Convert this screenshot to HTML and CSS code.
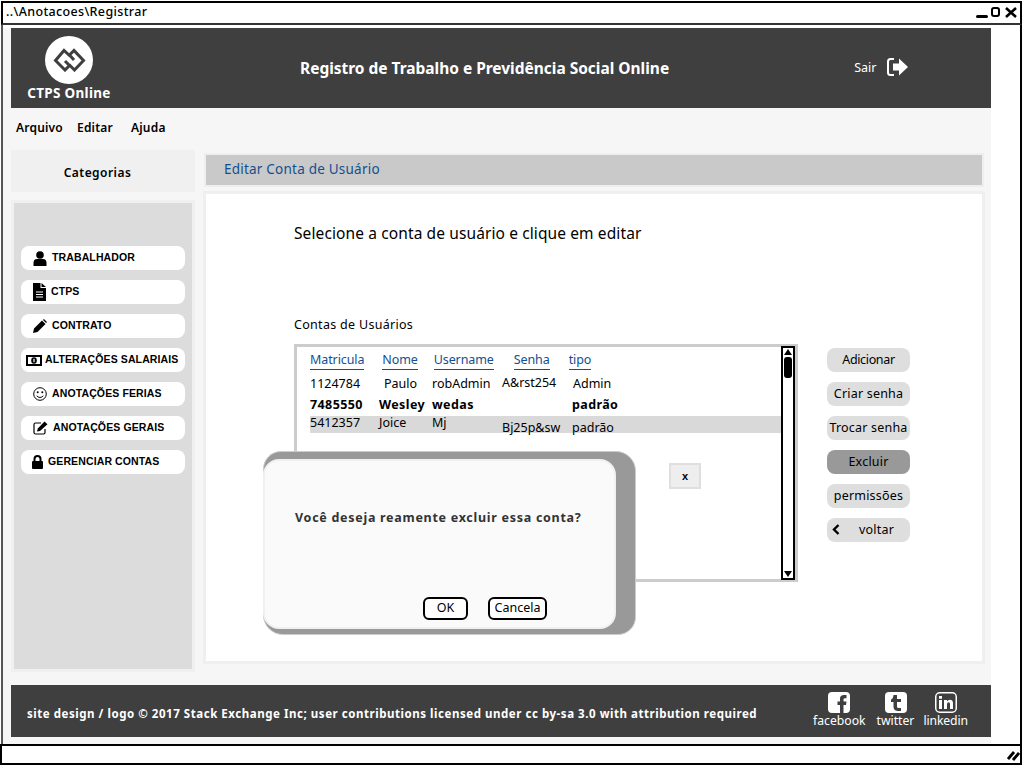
FILE: index.html
```html
<!DOCTYPE html>
<html lang="pt">
<head>
<meta charset="utf-8">
<title>CTPS Online</title>
<link rel="stylesheet" href="styles.css">
</head>
<body>
<div class="window">
  <div class="titlebar">
    <span class="path">..\Anotacoes\Registrar</span>
    <div class="winctl">
      <span class="win-min"></span>
      <span class="win-max"></span>
      <svg class="win-x" width="12" height="11" viewBox="0 0 12 11"><path d="M1 1l10 9M11 1L1 10" stroke="#000" stroke-width="2.600" fill="none"/></svg>
    </div>
  </div>
  <div class="body">
    <div class="sheet">
    <header class="hero">
      <div class="brand">
        <div class="logo">
          <svg width="33" height="24" viewBox="0 0 33 24"><path d="M17 8L11 2.500 2.500 12.500 12 22l4.500-4.500-4.500-4.500M16 16.500l5.500 5.500 9-9.500-9.500-10L16.500 7l4.500 5" stroke="#3f3f3f" stroke-width="3" fill="none"/></svg>
        </div>
        <span class="brand-name">CTPS Online</span>
      </div>
      <h1 class="hero-title">Registro de Trabalho e Previdência Social Online</h1>
      <div class="logout">
        <span>Sair</span>
        <svg width="23" height="20" viewBox="0 0 23 20"><path d="M8 2H4.500Q2 2 2 4.500v11Q2 18 4.500 18H8" stroke="#fff" stroke-width="2" fill="none"/><path d="M7 6.500h6V1.500l9 8.500-9 8.500v-5H7z" fill="#fff"/></svg>
      </div>
    </header>
    <nav class="menu"><span>Arquivo</span><span>Editar</span><span>Ajuda</span></nav>
    <div class="main">
      <aside class="side">
        <div class="cat">Categorias</div>
        <div class="side-panel">
          <a class="nav nav-a"><svg width="14" height="15" viewBox="0 0 14 15"><circle cx="7" cy="4" r="3.800"/><path d="M.5 15v-3Q.5 8 4 8h6q3.500 0 3.500 4v3z"/></svg><span>TRABALHADOR</span></a>
          <a class="nav nav-b"><svg width="13" height="18" viewBox="0 0 13 18"><path d="M0 0h7.500v5H13v13H0z"/><path d="M8.500 0L13 4H8.500z"/><path d="M3 9h7M3 11.500h7M3 14h7" stroke="#fff" stroke-width="1.200"/></svg><span>CTPS</span></a>
          <a class="nav nav-c"><svg width="14" height="14" viewBox="0 0 14 14"><path d="M0 14l1-4.500L9 1.500l3.500 3.500L4.500 13zM10 .9l.9-.9L14 3.100l-.9.9z"/></svg><span>CONTRATO</span></a>
          <a class="nav nav-d"><svg width="16" height="11" viewBox="0 0 16 11"><rect width="16" height="11"/><rect x="2" y="2" width="12" height="7" fill="#fff"/><ellipse cx="8" cy="5.500" rx="2.800" ry="3.200"/><rect x="7.400" y="3.800" width="1.200" height="3.400" fill="#fff"/></svg><span>ALTERAÇÕES SALARIAIS</span></a>
          <a class="nav nav-e"><svg width="14" height="14" viewBox="0 0 14 14"><circle cx="7" cy="7" r="6.300" fill="none" stroke="#000"/><circle cx="4.700" cy="5.300" r="1"/><circle cx="9.300" cy="5.300" r="1"/><path d="M3.700 8.800q3.300 3.400 6.600 0" fill="none" stroke="#000"/></svg><span>ANOTAÇÕES FERIAS</span></a>
          <a class="nav nav-f"><svg width="15" height="14" viewBox="0 0 15 14"><path d="M8 2H2.500Q1 2 1 3.500v8Q1 13 2.500 13h8q1.500 0 1.500-1.500V8" fill="none" stroke="#000" stroke-width="1.200"/><path d="M4 10.500l.8-3L11.500.5 14.500 3.200 7 10z"/></svg><span>ANOTAÇÕES GERAIS</span></a>
          <a class="nav nav-g"><svg width="11" height="14" viewBox="0 0 11 14"><path d="M2.500 6V4a3 3 0 0 1 6 0v2" fill="none" stroke="#000" stroke-width="2"/><rect y="6" width="11" height="8" rx="1"/></svg><span>GERENCIAR CONTAS</span></a>
        </div>
      </aside>
      <section class="content">
        <div class="crumb"><span>Editar Conta de Usuário</span></div>
        <div class="panel">
          <p class="lead">Selecione a conta de usuário e clique em editar</p>
          <p class="list-label">Contas de Usuários</p>
          <div class="list-row">
            <div class="list">
              <div class="list-body">
                <div class="thead">
                  <a class="th th-1">Matricula</a><a class="th th-2">Nome</a><a class="th th-3">Username</a><a class="th th-4">Senha</a><a class="th">tipo</a>
                </div>
                <div class="tr tr-1">
                  <span>1124784</span><span class="in-5">Paulo</span><span>robAdmin</span><span class="up">A&amp;rst254</span><span class="in-1">Admin</span>
                </div>
                <div class="tr tr-2">
                  <span>7485550</span><span>Wesley</span><span>wedas</span><span></span><span>padrão</span>
                </div>
                <div class="tr tr-3">
                  <span class="up2">5412357</span><span class="up2">Joice</span><span class="up2">Mj</span><span class="down">Bj25p&amp;sw</span><span class="down">padrão</span>
                </div>
              </div>
              <div class="scroll">
                <span class="sc-up"></span>
                <span class="sc-thumb"></span>
                <span class="sc-fill"></span>
                <span class="sc-down"></span>
              </div>
            </div>
            <div class="actions">
              <button class="btn btn-tight">Adicionar</button>
              <button class="btn">Criar senha</button>
              <button class="btn">Trocar senha</button>
              <button class="btn btn-dark">Excluir</button>
              <button class="btn">permissões</button>
              <button class="btn btn-back"><svg width="8" height="11" viewBox="0 0 8 11"><path d="M6.500 1L2 5.500 6.500 10" stroke="#000" stroke-width="2.400" fill="none"/></svg><span>voltar</span></button>
            </div>
          </div>
        </div>
      </section>
    </div>
    <footer class="foot">
      <p class="legal">site design / logo © 2017 Stack Exchange Inc; user contributions licensed under cc by-sa 3.0 with attribution required</p>
      <div class="social">
        <a class="soc soc-fb"><svg width="22" height="21" viewBox="0 0 22 21"><rect width="22" height="21" rx="4" fill="#fff"/><path d="M12 21v-8H9.500V9.500H12V6.500Q12 3 16 3h2.500v3.300H17q-1.500 0-1.500 1.300v1.900h3l-.5 3.500h-2.500v8z" fill="#3f3f3f"/></svg><span>facebook</span></a>
        <a class="soc soc-tw"><svg width="22" height="21" viewBox="0 0 22 21"><rect width="22" height="21" rx="4" fill="#fff"/><path d="M8.500 3H12v4h4v3h-4v4.500q0 1.500 1.500 1.500H16v3h-3.500Q8.500 18.500 8.500 14.500V10H6V7.500Q8 7 8.500 3z" fill="#3f3f3f"/></svg><span>twitter</span></a>
        <a class="soc soc-in"><svg width="22" height="21" viewBox="0 0 22 21"><rect x=".75" y=".75" width="20.500" height="19.500" rx="4" fill="none" stroke="#fff" stroke-width="1.500"/><path d="M4 8h3v9H4zM4 4h3v2.700H4zM9 8h3v1.300Q13 7.800 15 7.800q3 0 3 3.700V17h-3v-5q0-1.700-1.400-1.700-1.600 0-1.600 1.900V17H9z" fill="#fff"/></svg><span>linkedin</span></a>
      </div>
    </footer>
    </div>
  </div>
  <div class="statusbar">
    <svg width="13" height="12" viewBox="0 0 13 12"><path d="M1 10L7 3M6 11L12 4" stroke="#000" stroke-width="2.800" fill="none"/></svg>
  </div>
  <button class="close-x">x</button>
  <div class="dialog">
    <div class="dialog-card">
      <p class="dialog-text">Você deseja reamente excluir essa conta?</p>
      <div class="dialog-actions">
        <button class="dbtn dbtn-ok">OK</button>
        <button class="dbtn dbtn-cancel">Cancela</button>
      </div>
    </div>
  </div>
</div>
</body>
</html>
```
FILE: styles.css
```css
* { box-sizing: border-box; }
html, body { margin: 0; padding: 0; background: #fff; }
body { width: 1024px; height: 768px; overflow: hidden; font-family: "Noto Sans", "Lato", sans-serif; color: #000; }
p, h1 { margin: 0; }
a { color: inherit; text-decoration: none; }
button { font-family: inherit; margin: 0; cursor: pointer; }

.window { position: relative; width: 1022px; height: 767px; padding-top: 1px; display: flex; flex-direction: column; }

.titlebar { height: 24px; margin-left: 1px; border: 2px solid #000; border-bottom-color: #333; background: #fff; display: flex; align-items: center; justify-content: space-between; padding: 0 3px 0 3px; flex: none; }
.path { font-size: 12.500px; line-height: 18px; font-weight: 500; letter-spacing: .35px; margin-top: -2px; }
.winctl { display: flex; align-items: center; gap: 3px; margin-top: -2px; }
.win-min { width: 12px; height: 3px; background: #000; border-radius: 2px; margin-top: 8px; }
.win-max { width: 9px; height: 10px; border: 2px solid #000; border-radius: 3px; margin-right: 2px; }

.body { flex: none; height: 719px; margin-left: 1px; border-left: 2px solid #555; border-right: 2px solid #000; padding: 3px 29px 0 0; background: #fff; display: flex; flex-direction: column; }
.sheet { flex: 1; background: #f6f6f6; padding-left: 8px; display: flex; flex-direction: column; }

.hero { height: 80px; background: #3f3f3f; color: #fff; display: flex; align-items: flex-start; flex: none; }
.brand { width: 116px; padding-top: 8px; display: flex; flex-direction: column; align-items: center; }
.logo { width: 48px; height: 48px; border-radius: 50%; background: #fff; display: flex; align-items: center; justify-content: center; }
.brand-name { font-size: 13.500px; line-height: 17px; font-weight: 700; letter-spacing: .3px; margin-top: 1px; white-space: nowrap; }
.hero-title { font-size: 15.500px; line-height: 20px; font-weight: 700; letter-spacing: -.02px; margin-left: 173px; margin-top: 30px; white-space: nowrap; }
.logout { display: flex; align-items: center; gap: 10px; font-size: 12.500px; margin-left: 185px; margin-top: 29px; height: 20px; }

.menu { height: 42px; flex: none; padding: 0 0 4px 5px; display: grid; grid-template-columns: 61px 54px auto; justify-content: start; align-items: center; font-size: 12px; font-weight: 600; letter-spacing: .2px; }

.main { flex: none; height: 525px; display: flex; }
.side { width: 184px; display: flex; flex-direction: column; gap: 8px; flex: none; }
.cat { height: 42px; flex: none; background: #f0f0f0; display: flex; align-items: center; justify-content: center; font-size: 12px; font-weight: 600; letter-spacing: .45px; padding-right: 11px; padding-top: 3px; }
.side-panel { height: 472px; flex: none; background: #dcdcdc; border: 3px solid #f0f0f0; padding: 43px 7px 0 7px; display: flex; flex-direction: column; gap: 10px; }
.nav { height: 24px; flex: none; background: #fff; border-radius: 8px; display: flex; align-items: center; font-family: "Liberation Sans", Arial, sans-serif; font-size: 10.500px; font-weight: 700; letter-spacing: .12px; white-space: nowrap; }
.nav svg { flex: none; }
.nav span { margin-top: -2px; }
.nav-a { padding-left: 12px; gap: 5px; }
.nav-b { padding-left: 12px; gap: 5px; }
.nav-c { padding-left: 12px; gap: 5px; }
.nav-d { padding-left: 5px; gap: 3px; }
.nav-e { padding-left: 12px; gap: 5px; }
.nav-f { padding-left: 12px; gap: 5px; }
.nav-g { padding-left: 11px; gap: 5px; }

.content { width: 783px; margin-left: 8px; flex: none; display: flex; flex-direction: column; padding-top: 3px; gap: 4px; }
.crumb { height: 34px; flex: none; width: 780px; margin-left: 1px; background: #c9c9c9; border: 2px solid #eee; display: flex; align-items: center; padding-left: 18px; font-size: 13.500px; letter-spacing: .22px; color: #134f8f; }
.crumb span { margin-top: -2px; }
.panel { height: 473px; flex: none; width: 782px; background: #fff; border: 3px solid #efefef; padding: 28px 0 0 88px; display: flex; flex-direction: column; }
.lead { font-size: 15.500px; line-height: 22px; letter-spacing: .11px; }
.list-label { font-size: 12.500px; line-height: 16px; letter-spacing: .3px; margin-top: 73px; }
.list-row { display: flex; margin-top: 11px; align-items: flex-start; }
.list { width: 504px; height: 238px; border: 3px solid #ccc; display: flex; flex: none; background: #fff; }
.list-body { flex: 1; padding: 4px 0 0 13px; font-size: 12.500px; }
.thead { display: flex; height: 22px; align-items: flex-start; color: #134f8f; }
.th { border-bottom: 1px solid #134f8f; line-height: 18px; height: 19px; white-space: nowrap; letter-spacing: -.1px; }
.th-1 { margin-right: 18px; }
.th-2 { margin-right: 16px; }
.th-3 { margin-right: 20px; }
.th-4 { margin-right: 19px; }
.tr { display: grid; grid-template-columns: 69px 53px 70px 70px 1fr; align-items: start; line-height: 18px; white-space: nowrap; }
.tr-1 { height: 20px; margin-top: 2px; }
.tr-2 { height: 21px; font-weight: 700; letter-spacing: .4px; padding-top: 1px; }
.tr-3 { height: 17px; background: #d9d9d9; }
.in-5 { padding-left: 5px; }
.in-1 { padding-left: 1px; }
.up { margin-top: -1px; }
.up2 { margin-top: -2px; }
.down { padding-top: 3px; }
.scroll { width: 14px; flex: none; margin-top: -1px; margin-bottom: -1px; border: 2px solid #000; display: flex; flex-direction: column; align-items: center; background: #fff; }
.sc-up { width: 0; height: 0; border-left: 4px solid transparent; border-right: 4px solid transparent; border-bottom: 6px solid #000; margin-top: 1px; }
.sc-thumb { width: 8px; height: 21px; background: #000; border-radius: 3px; margin-top: 2px; }
.sc-fill { flex: 1; }
.sc-down { width: 0; height: 0; border-left: 4px solid transparent; border-right: 4px solid transparent; border-top: 6px solid #000; margin-bottom: 1px; }

.actions { display: flex; flex-direction: column; gap: 10px; margin-left: 29px; margin-top: 4px; width: 83px; flex: none; }
.btn { height: 24px; width: 83px; border: 0; border-radius: 8px; background: #dedede; font-size: 12.500px; letter-spacing: .2px; padding: 0 0 2px; color: #000; white-space: nowrap; }
.btn-tight { letter-spacing: -.35px; }
.btn-dark { background: #999; }
.btn-back { display: flex; align-items: center; padding-left: 5px; gap: 19px; }

.foot { flex: none; height: 52px; margin-top: 10px; background: #3f3f3f; color: #fff; display: flex; align-items: center; padding-left: 16px; }
.legal { font-size: 11.500px; font-weight: 700; letter-spacing: .54px; white-space: nowrap; margin-top: 4px; }
.social { display: flex; margin-left: auto; margin-right: 23px; margin-top: -2px; }
.soc { display: flex; flex-direction: column; align-items: center; font-size: 12.200px; line-height: 15px; white-space: nowrap; }
.soc-fb { margin-right: 11px; }
.soc-tw { margin-right: 9px; }
.soc-in { letter-spacing: -.1px; }

.statusbar { height: 21px; flex: none; border: 2px solid #000; background: #fff; display: flex; align-items: center; justify-content: flex-end; }

.close-x { position: absolute; left: 669px; top: 463px; width: 32px; height: 26px; background: #eee; border: 2px solid #dfdfdf; font-family: "Liberation Sans", sans-serif; font-size: 11px; font-weight: 700; padding: 0; }
.dialog { position: absolute; left: 263px; top: 451px; width: 373px; height: 184px; background: #999; border: 1px solid #ccc; border-radius: 18px 20px 18px 20px; padding-top: 7px; }
.dialog-card { width: 353px; height: 170px; background: #fafafa; border: 2px solid #f0f0f0; border-radius: 16px; margin-left: -1px; padding: 48px 0 0 30px; display: flex; flex-direction: column; }
.dialog-text { font-size: 12.500px; line-height: 18px; font-weight: 700; letter-spacing: .72px; color: #333; white-space: nowrap; }
.dialog-actions { display: flex; gap: 20px; margin-top: 70px; margin-left: 128px; }
.dbtn { height: 23px; background: #fff; border: 2px solid #000; border-radius: 6px; font-size: 12.500px; padding: 0 0 2px; color: #000; }
.dbtn-ok { width: 45px; }
.dbtn-cancel { width: 59px; }
```
